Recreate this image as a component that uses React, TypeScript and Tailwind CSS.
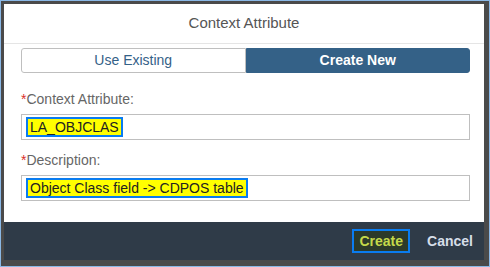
import React from 'react';

const font = { fontFamily: '"Liberation Sans", Arial, sans-serif' };

const Field: React.FC<{ label: string; value: string }> = ({ label, value }) => (
  <div className="flex flex-col">
    <label className="h-[18px] text-[14px] leading-[18px] text-[#666]">
      <span className="text-[#d9302b]">*</span>
      {label}
    </label>
    <div className="mt-[6px] flex h-[26px] items-center border border-[#bfbfbf] bg-white px-[4px]">
      <span className="border-2 border-[#0a7cf0] bg-[#ffff00] px-[2px] text-[14px] leading-[16px] text-[#222]">
        {value}
      </span>
    </div>
  </div>
);

const App: React.FC = () => {
  return (
    <div
      className="flex h-[267px] w-[490px] flex-col border border-[#8ab8e6] bg-[#4a4a4a] pb-[6px] pl-[3px] pr-[5px] pt-[3px]"
      style={font}
    >
      <div className="flex flex-1 flex-col bg-white">
        <div className="flex h-[40px] items-center justify-center border-b border-[#e5e5e5] text-[15px] text-[#555]">
          Context Attribute
        </div>

        <div className="flex flex-1 flex-col pl-[17px] pr-[14px] pt-[4px]">
          <div className="flex h-[25px] text-[14px]">
            <button className="flex-1 rounded-l-[3px] border border-[#bfbfbf] bg-white text-[#346187]">
              Use Existing
            </button>
            <button className="flex-1 rounded-r-[3px] border border-[#346187] bg-[#346187] font-bold text-white">
              Create New
            </button>
          </div>

          <div className="mt-[17px] flex flex-col gap-[11px]">
            <Field label="Context Attribute:" value="LA_OBJCLAS" />
            <Field label="Description:" value="Object Class field -> CDPOS table" />
          </div>
        </div>

        <div className="flex h-[38px] items-center justify-end gap-[15px] bg-[#2f3b48] pr-[9px] text-[14px]">
          <button className="flex h-[24px] items-center border-2 border-[#0a7cf0] bg-[#2c3a2a] px-[5px] font-bold text-[#c4d94a]">
            Create
          </button>
          <button className="px-[2px] font-bold text-[#d6dee8]">Cancel</button>
        </div>
      </div>
    </div>
  );
};

export default App;
